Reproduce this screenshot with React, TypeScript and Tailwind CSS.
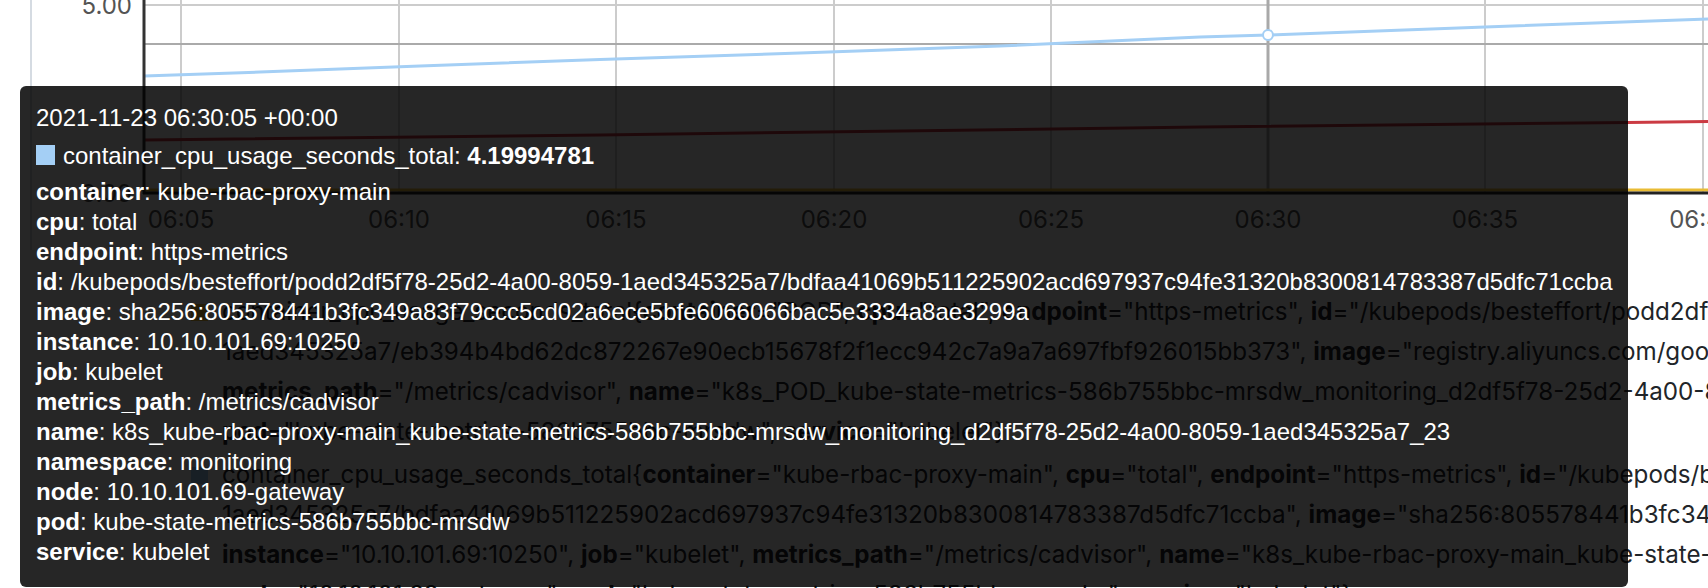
import React from "react";

const gridX = [181, 399, 616, 834, 1051, 1485, 1703];
const xLabels: [number, string][] = [
  [181, "06:05"],
  [399, "06:10"],
  [616, "06:15"],
  [834, "06:20"],
  [1051, "06:25"],
  [1268, "06:30"],
  [1485, "06:35"],
  [1703, "06:40"],
];

function Chart() {
  return (
    <svg width={1708} height={250} className="block shrink-0" style={{ fontFamily: "Inter, 'Noto Sans', sans-serif" }}>
      <line x1={31} y1={0} x2={31} y2={250} stroke="#d5dbe2" strokeWidth={2} />
      {gridX.map((x) => (
        <line key={x} x1={x} y1={0} x2={x} y2={193} stroke="#cccccc" strokeWidth={2} />
      ))}
      <line x1={144} y1={5} x2={1708} y2={5} stroke="#cccccc" strokeWidth={2} />
      {/* crosshair */}
      <line x1={1268} y1={0} x2={1268} y2={193} stroke="#a9a9a9" strokeWidth={3} />
      <line x1={144} y1={44} x2={1708} y2={44} stroke="#aaaaaa" strokeWidth={2} />
      {/* series */}
      <polyline
        points="144,140 600,135 900,131 1200,127 1628,122.5 1708,121.5"
        fill="none"
        stroke="#cb3b43"
        strokeWidth={3}
      />
      <line x1={144} y1={190} x2={1708} y2={190} stroke="#e9bc35" strokeWidth={3} />
      <polyline
        points="144,76 260,72 420,66 600,59.5 800,53 1000,46 1200,37 1268,35 1485,27 1708,19"
        fill="none"
        stroke="#a4cff5"
        strokeWidth={3}
      />
      <circle cx={1268} cy={35} r={5} fill="#ffffff" stroke="#a4cff5" strokeWidth={2} />
      {/* axes */}
      <line x1={144} y1={0} x2={144} y2={194} stroke="#333333" strokeWidth={3} />
      <line x1={143} y1={193} x2={1708} y2={193} stroke="#222222" strokeWidth={3} />
      <text x={132} y={14} textAnchor="end" fontSize={24} fill="#545454">
        5.00
      </text>
      <text x={132} y={202} textAnchor="end" fontSize={24} fill="#545454">
        0.00
      </text>
      {xLabels.map(([x, t]) => (
        <text key={t} x={x} y={228} textAnchor="middle" fontSize={24} fill="#545454">
          {t}
        </text>
      ))}
    </svg>
  );
}

type Seg = [string, string];

function LegendLine({ segs, swatch }: { segs: Seg[]; swatch?: string }) {
  return (
    <div className="flex items-center h-[40px] whitespace-nowrap">
      {swatch ? (
        <span className="inline-block w-[17px] h-[17px] mr-[14px] shrink-0" style={{ background: swatch }} />
      ) : (
        <span className="inline-block w-[31px] shrink-0" />
      )}
      <span>
        {segs.map(([k, v], i) =>
          k ? (
            <React.Fragment key={i}>
              <b className="font-bold">{k}</b>
              {v}
            </React.Fragment>
          ) : (
            <React.Fragment key={i}>{v}</React.Fragment>
          )
        )}
      </span>
    </div>
  );
}

function Legend() {
  return (
    <div
      className="mt-[42px] pl-[191px] flex flex-col gap-[3px] text-[24.2px] text-[#212529]"
      style={{ fontFamily: "Inter, 'Noto Sans', sans-serif" }}
    >
      <div className="flex flex-col">
        <LegendLine
          swatch="#edc240"
          segs={[
            ["", "container_cpu_usage_seconds_total{"],
            ["container", '="POD", '],
            ["cpu", '="total", '],
            ["endpoint", '="https-metrics", '],
            ["id", '="/kubepods/besteffort/podd2df5f78-25d2-4a00-8059-'],
          ]}
        />
        <LegendLine
          segs={[
            ["", '1aed345325a7/eb394b4bd62dc872267e90ecb15678f2f1ecc942c7a9a7a697fbf926015bb373", '],
            ["image", '="registry.aliyuncs.com/google_containers/pause:3.2", '],
            ["instance", '="10.10.101.69:10250", '],
            ["job", '="kubelet",'],
          ]}
        />
        <LegendLine
          segs={[
            ["metrics_path", '="/metrics/cadvisor", '],
            ["name", '="k8s_POD_kube-state-metrics-586b755bbc-mrsdw_monitoring_d2df5f78-25d2-4a00-8059-1aed345325a7_0", '],
            ["namespace", '="monitoring", '],
            ["node", '="10.10.101.69-gateway",'],
          ]}
        />
        <LegendLine
          segs={[
            ["pod", '="kube-state-metrics-586b755bbc-mrsdw", '],
            ["service", '="kubelet"}'],
          ]}
        />
      </div>
      <div className="flex flex-col">
        <LegendLine
          swatch="#a4cff5"
          segs={[
            ["", "container_cpu_usage_seconds_total{"],
            ["container", '="kube-rbac-proxy-main", '],
            ["cpu", '="total", '],
            ["endpoint", '="https-metrics", '],
            ["id", '="/kubepods/besteffort/podd2df5f78-25d2-4a00-8059-'],
          ]}
        />
        <LegendLine
          segs={[
            ["", '1aed345325a7/bdfaa41069b511225902acd697937c94fe31320b8300814783387d5dfc71ccba", '],
            ["image", '="sha256:805578441b3fc349a83f79ccc5cd02a6ece5bfe6066066bac5e3334a8ae3299a",'],
          ]}
        />
        <LegendLine
          segs={[
            ["instance", '="10.10.101.69:10250", '],
            ["job", '="kubelet", '],
            ["metrics_path", '="/metrics/cadvisor", '],
            ["name", '="k8s_kube-rbac-proxy-main_kube-state-metrics-586b755bbc-mrsdw_monitoring_d2df5f78-25d2-4a00-8059-1aed345325a7_23", '],
            ["namespace", '="monitoring",'],
          ]}
        />
        <LegendLine
          segs={[
            ["node", '="10.10.101.69-gateway", '],
            ["pod", '="kube-state-metrics-586b755bbc-mrsdw", '],
            ["service", '="kubelet"}'],
          ]}
        />
      </div>
    </div>
  );
}

const labels: [string, string][] = [
  ["container", "kube-rbac-proxy-main"],
  ["cpu", "total"],
  ["endpoint", "https-metrics"],
  ["id", "/kubepods/besteffort/podd2df5f78-25d2-4a00-8059-1aed345325a7/bdfaa41069b511225902acd697937c94fe31320b8300814783387d5dfc71ccba"],
  ["image", "sha256:805578441b3fc349a83f79ccc5cd02a6ece5bfe6066066bac5e3334a8ae3299a"],
  ["instance", "10.10.101.69:10250"],
  ["job", "kubelet"],
  ["metrics_path", "/metrics/cadvisor"],
  ["name", "k8s_kube-rbac-proxy-main_kube-state-metrics-586b755bbc-mrsdw_monitoring_d2df5f78-25d2-4a00-8059-1aed345325a7_23"],
  ["namespace", "monitoring"],
  ["node", "10.10.101.69-gateway"],
  ["pod", "kube-state-metrics-586b755bbc-mrsdw"],
  ["service", "kubelet"],
];

function Tooltip() {
  return (
    <div
      className="absolute left-[20px] top-[86px] w-[1608px] h-[501px] rounded-[6px] bg-[rgba(0,0,0,0.85)] text-white text-[24px] pl-[16px] pt-[17px] whitespace-nowrap"
      style={{ fontFamily: "'Liberation Sans', Arial, sans-serif" }}
    >
      <div className="leading-[30px]">2021-11-23 06:30:05 +00:00</div>
      <div className="mt-[8px] leading-[30px] flex items-center">
        <span className="inline-block w-[19px] h-[20px] bg-[#a4cff5] mr-[8px] mt-[-3px]" />
        <span>
          container_cpu_usage_seconds_total: <b className="font-bold">4.19994781</b>
        </span>
      </div>
      <div className="mt-[6px] flex flex-col">
        {labels.map(([k, v]) => (
          <div key={k} className="leading-[30px]">
            <b className="font-bold">{k}</b>: {v}
          </div>
        ))}
      </div>
    </div>
  );
}

export default function App() {
  return (
    <div className="relative w-[1708px] h-[588px] overflow-hidden bg-white">
      <div className="flex flex-col">
        <Chart />
        <Legend />
      </div>
      <Tooltip />
    </div>
  );
}
